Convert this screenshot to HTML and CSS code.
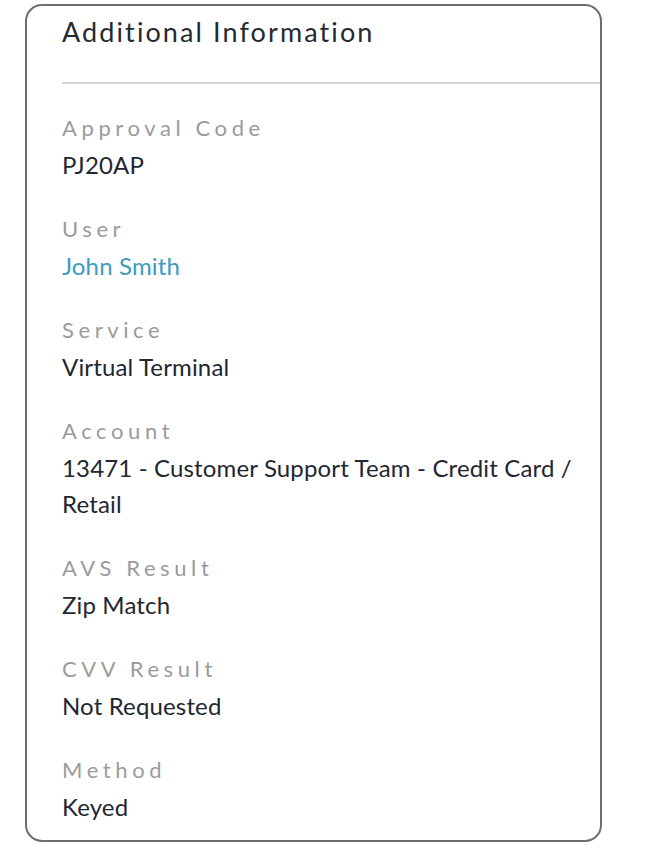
FILE: index.html
```html
<!DOCTYPE html>
<html>
<head>
<meta charset="utf-8">
<link rel="stylesheet" href="styles.css">
</head>
<body>
<div class="card">
  <div class="card-header">
    <h2 class="card-title">Additional Information</h2>
  </div>
  <dl class="info-list">
    <div class="info-item">
      <dt class="info-label">Approval Code</dt>
      <dd class="info-value">PJ20AP</dd>
    </div>
    <div class="info-item">
      <dt class="info-label">User</dt>
      <dd class="info-value"><a class="info-link" href="#">John Smith</a></dd>
    </div>
    <div class="info-item">
      <dt class="info-label">Service</dt>
      <dd class="info-value">Virtual Terminal</dd>
    </div>
    <div class="info-item">
      <dt class="info-label">Account</dt>
      <dd class="info-value">13471 - Customer Support Team - Credit Card / Retail</dd>
    </div>
    <div class="info-item">
      <dt class="info-label">AVS Result</dt>
      <dd class="info-value">Zip Match</dd>
    </div>
    <div class="info-item">
      <dt class="info-label">CVV Result</dt>
      <dd class="info-value">Not Requested</dd>
    </div>
    <div class="info-item">
      <dt class="info-label">Method</dt>
      <dd class="info-value">Keyed</dd>
    </div>
  </dl>
</div>
</body>
</html>
```
FILE: styles.css
```css
* { box-sizing: border-box; }
html, body { margin: 0; padding: 0; background: #fff; }
body {
  font-family: Lato, "Noto Sans", sans-serif;
  padding: 4px 58px 0 25px;
}
.card {
  border: 2.5px solid #6e6e6e;
  border-radius: 17px;
  height: 838px;
  padding-left: 35px;
  overflow: hidden;
}
.card-header {
  padding-top: 6px;
  border-bottom: 2px solid #d3d3d3;
  padding-bottom: 30px;
}
.card-title {
  margin: 0;
  font-weight: 400;
  font-size: 27px;
  line-height: 40px;
  color: #252a30;
  letter-spacing: 2.1px;
}
.info-list {
  margin: 0;
  padding: 25px 22px 0 0;
}
.info-item {
  margin-bottom: 27px;
}
.info-label {
  font-size: 22px;
  line-height: 38px;
  color: #9b9b9b;
  letter-spacing: 4.6px;
}
.info-value {
  margin: 0;
  font-size: 24px;
  line-height: 36px;
  color: #1f2732;
  letter-spacing: 0.15px;
}
.info-link {
  color: #3d9bc1;
  text-decoration: none;
}
```
